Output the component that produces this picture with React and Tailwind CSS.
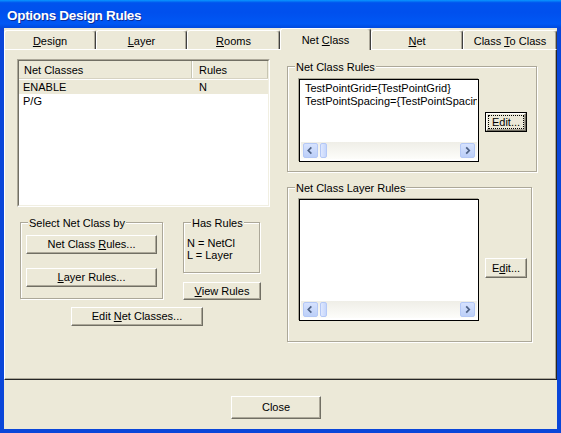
import React from "react";

function U({ children }) {
  return <span className="underline underline-offset-[1px] decoration-1">{children}</span>;
}

function Btn({ className = "", children }) {
  return (
    <div
      className={`flex items-center justify-center bg-[#ece9d8] border border-t-white border-l-white border-r-[#716f64] border-b-[#716f64] shadow-[inset_-1px_-1px_0_#aca899] leading-[13px] whitespace-pre ${className}`}
    >
      <span>{children}</span>
    </div>
  );
}

function FocusBtn({ className = "", children }) {
  return (
    <div className={`flex border border-black ${className}`}>
      <div className="flex-1 flex bg-[#ece9d8] border border-t-white border-l-white border-r-[#716f64] border-b-[#716f64] shadow-[inset_-1px_-1px_0_#aca899] p-[1px]">
        <div className="flex-1 flex items-center justify-center border border-dotted border-black leading-[13px]">
          <span>{children}</span>
        </div>
      </div>
    </div>
  );
}

function Group({ label, className = "", children }) {
  return (
    <div
      className={`relative border border-[#aca899] shadow-[inset_1px_1px_0_#ffffff,1px_1px_0_#ffffff] ${className}`}
    >
      <span className="absolute -top-[6px] left-[7px] bg-[#ece9d8] px-[1px] leading-[13px] whitespace-nowrap">
        {label}
      </span>
      {children}
    </div>
  );
}

function Arrow({ dir }) {
  return (
    <div className="w-[17px] h-full p-[1px]">
      <div className="w-full h-full rounded-[2px] border border-[#b4c8f6] bg-[linear-gradient(to_bottom,#d6e2fe,#bccff8)] flex items-center justify-center">
        <svg width="15" height="15" viewBox="0 0 15 15">
          {dir === "left" ? (
            <path d="M8.5 4 L5 7.5 L8.5 11" fill="none" stroke="#4d6185" strokeWidth="2" />
          ) : (
            <path d="M6 4 L9.5 7.5 L6 11" fill="none" stroke="#4d6185" strokeWidth="2" />
          )}
        </svg>
      </div>
    </div>
  );
}

function ScrollBar() {
  return (
    <div className="h-[17px] mb-[1px] shrink-0 flex px-[1px] bg-[linear-gradient(to_bottom,#efeee7,#fdfdfa)]">
      <Arrow dir="left" />
      <div className="w-[9px] h-full p-[1px]">
        <div className="w-full h-full rounded-[2px] border border-[#b4c8f6] bg-[linear-gradient(to_right,#dfe8fe,#c6d6fb)]" />
      </div>
      <div className="flex-1" />
      <Arrow dir="right" />
    </div>
  );
}

function TextBox({ className = "", lines = [] }) {
  return (
    <div
      className={`bg-white border border-black shadow-[-1px_-1px_0_#aca899] flex flex-col p-[1px] ${className}`}
    >
      <div className="flex-1 overflow-hidden pl-[4px] pt-[1px] leading-[13px] whitespace-nowrap">
        {lines.map((l) => (
          <div key={l}>{l}</div>
        ))}
      </div>
      <ScrollBar />
    </div>
  );
}

const tabBase =
  "border-t border-l border-r border-t-white border-l-white border-r-[#404040] rounded-t-[3px] shadow-[inset_-1px_0_0_#aca899] text-center leading-[13px] whitespace-nowrap bg-[#ece9d8]";

export default function App() {
  const tabs = [
    { w: "w-[92px]", label: <><U>D</U>esign</> },
    { w: "w-[91px]", label: <><U>L</U>ayer</> },
    { w: "w-[93px]", label: <><U>R</U>ooms</> },
    { w: "w-[91px]", label: <>Net <U>C</U>lass</>, sel: true },
    { w: "w-[92px]", label: <><U>N</U>et</> },
    { w: "w-[94px]", label: <>Class <U>T</U>o Class</> },
  ];

  return (
    <div className="w-[561px] h-[433px] flex flex-col bg-[#0a46d9] text-[11px] text-black font-['Liberation_Sans',Arial,sans-serif] overflow-hidden">
      {/* Title bar */}
      <div className="h-[28px] shrink-0 bg-[linear-gradient(to_bottom,#0997ff_0%,#0053ee_10%,#0050ee_45%,#0058f4_85%,#0049dd_100%)] pl-[7px] pt-[7px] leading-[17px] text-[13.5px] font-bold text-white tracking-[-0.3px] [text-shadow:1px_1px_0_#0b2d99]">
        Options Design Rules
      </div>

      {/* Client */}
      <div className="flex-1 mx-[4px] mb-[4px] bg-[#ece9d8] flex flex-col">
        {/* Tabs */}
        <div className="h-[21px] shrink-0 flex items-end">
          {tabs.map((t, i) =>
            t.sel ? (
              <div key={i} className={`relative z-10 h-[22px] -mb-[1px] pt-[5px] ${t.w} ${tabBase}`}>
                {t.label}
              </div>
            ) : (
              <div key={i} className={`h-[19px] pt-[4px] ${t.w} ${tabBase}`}>
                {t.label}
              </div>
            )
          )}
        </div>

        {/* Tab panel */}
        <div className="h-[331px] shrink-0 border border-t-white border-l-white border-r-[#262626] border-b-[#262626] shadow-[inset_-1px_-1px_0_#aca899] flex items-start">
          {/* Left column */}
          <div className="ml-[12px] mt-[9px] w-[253px] flex flex-col">
            {/* List view */}
            <div className="w-[253px] h-[148px] border border-t-[#aca899] border-l-[#aca899] border-b-white border-r-white">
              <div className="w-full h-full bg-white border border-t-[#716f64] border-l-[#716f64] border-b-[#f1efe2] border-r-[#f1efe2] flex flex-col">
                <div className="h-[18px] flex bg-[#ece9d8] border-b border-b-[#d6d2c2]">
                  <div className="w-[173px] pl-[5px] pt-[3px] leading-[13px] border-r border-r-[#c7c5b2]">
                    Net Classes
                  </div>
                  <div className="flex-1 pl-[6px] pt-[3px] leading-[13px] border-l border-l-white border-r border-r-[#c7c5b2]">
                    Rules
                  </div>
                </div>
                <div className="mt-[1px] flex h-[14px] leading-[14px] bg-[#ece9d8]">
                  <div className="w-[173px] pl-[4px]">ENABLE</div>
                  <div className="flex-1 pl-[7px]">N</div>
                </div>
                <div className="flex h-[14px] leading-[14px]">
                  <div className="w-[173px] pl-[4px]">P/G</div>
                  <div className="flex-1 pl-[7px]"></div>
                </div>
              </div>
            </div>

            {/* Groups row */}
            <div className="flex items-start mt-[15px] ml-[3px]">
              <Group label="Select Net Class by" className="w-[143px] h-[77px] flex flex-col">
                <Btn className="ml-[5px] mt-[12px] w-[131px] h-[19px]">
                  {"Net Class "}<U>R</U>{"ules..."}
                </Btn>
                <Btn className="ml-[5px] mt-[14px] w-[131px] h-[19px]">
                  <U>L</U>{"ayer Rules..."}
                </Btn>
              </Group>
              <div className="ml-[20px] flex flex-col">
                <Group label="Has Rules" className="w-[77px] h-[51px]">
                  <div className="pl-[3px] pt-[14px] leading-[12px] whitespace-nowrap">
                    <div>N = NetCl</div>
                    <div>L = Layer</div>
                  </div>
                </Group>
                <Btn className="mt-[9px] w-[78px] h-[18px]">
                  <U>V</U>{"iew Rules"}
                </Btn>
              </div>
            </div>

            <Btn className="mt-[7px] ml-[54px] w-[132px] h-[19px]">
              {"Edit "}<U>N</U>{"et Classes..."}
            </Btn>
          </div>

          {/* Right column */}
          <div className="ml-[17px] mt-[16px] flex flex-col">
            <Group label="Net Class Rules" className="w-[250px] h-[106px] flex items-start">
              <TextBox
                className="ml-[11px] mt-[12px] w-[180px] h-[83px]"
                lines={["TestPointGrid={TestPointGrid}", "TestPointSpacing={TestPointSpacing}"]}
              />
              <FocusBtn className="ml-[6px] mt-[45px] w-[42px] h-[20px]">Edit...</FocusBtn>
            </Group>
            <Group label="Net Class Layer Rules" className="mt-[15px] w-[245px] h-[155px] flex items-start">
              <TextBox className="ml-[11px] mt-[11px] w-[180px] h-[122px]" lines={[]} />
              <Btn className="ml-[6px] mt-[70px] w-[42px] h-[20px]">
                {"E"}<U>d</U>{"it..."}
              </Btn>
            </Group>
          </div>
        </div>

        {/* Footer */}
        <div className="flex-1">
          <Btn className="ml-[227px] mt-[16px] w-[90px] h-[23px]">Close</Btn>
        </div>
      </div>
    </div>
  );
}
